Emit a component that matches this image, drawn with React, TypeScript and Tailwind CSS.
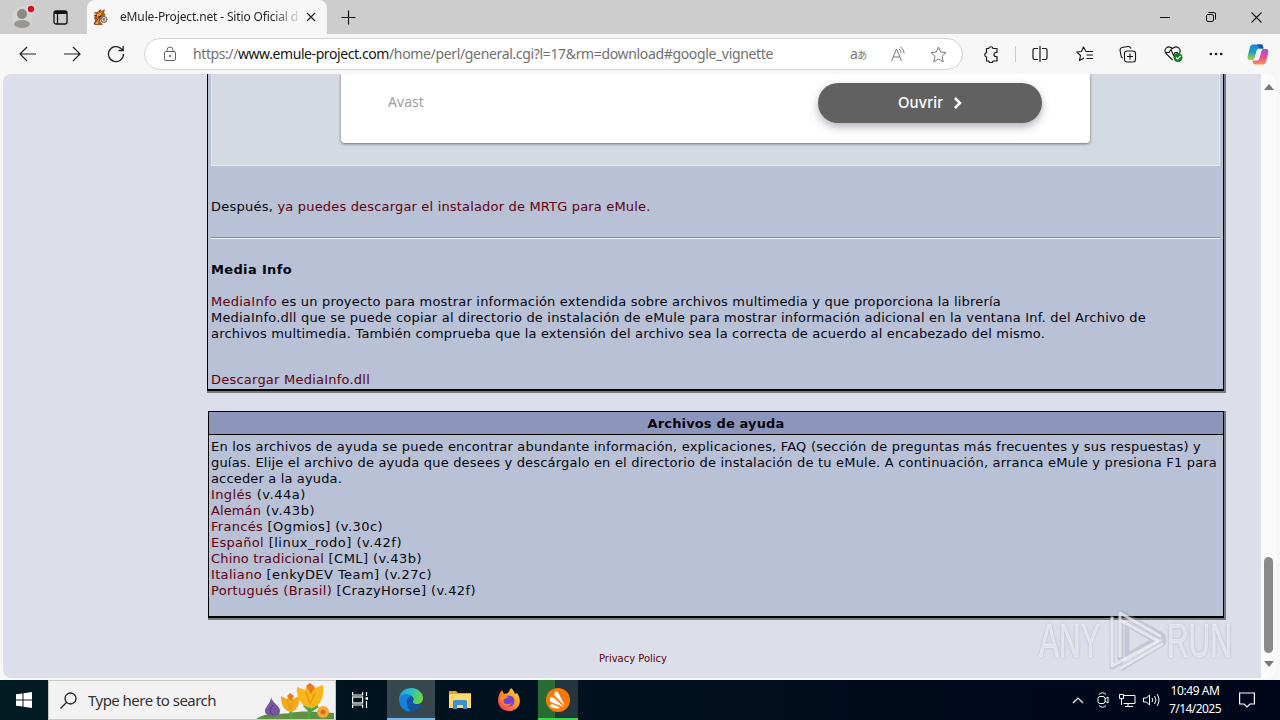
import { useLayoutEffect, useRef, useState } from "react";
import type { ReactNode } from "react";

/* Spreads its text over a given width by adjusting the letter spacing. */
function Fit({ w, className = "", children }: { w: number; className?: string; children: ReactNode }) {
  const ref = useRef<HTMLSpanElement>(null);
  const [gap, setGap] = useState(0);
  useLayoutEffect(() => {
    const el = ref.current;
    if (!el) return;
    const n = (el.textContent || "").length;
    setGap((w - el.getBoundingClientRect().width) / n);
  }, [w]);
  return (
    <span ref={ref} className={"inline-block whitespace-nowrap " + className} style={{ letterSpacing: gap + "px" }}>
      {children}
    </span>
  );
}

const Link = ({ children }: { children: ReactNode }) => <a className="text-[#600010]">{children}</a>;

const helpFiles = [
  { name: "Inglés", rest: " (v.44a)", nw: 41, w: 95 },
  { name: "Alemán", rest: " (v.43b)", nw: 50, w: 104 },
  { name: "Francés", rest: " [Ogmios] (v.30c)", nw: 52, w: 172 },
  { name: "Español", rest: " [linux_rodo] (v.42f)", nw: 53, w: 191 },
  { name: "Chino tradicional", rest: " [CML] (v.43b)", nw: 113, w: 211 },
  { name: "Italiano", rest: " [enkyDEV Team] (v.27c)", nw: 51, w: 221 },
  { name: "Portugués (Brasil)", rest: " [CrazyHorse] (v.42f)", nw: 121, w: 265 },
];

function TitleBar() {
  return (
    <div className="flex h-[34px] bg-[#cdcdcd]">
      <div className="flex w-[87px] items-center rounded-br-lg pl-3">
        <svg width="24" height="28" viewBox="0 0 24 28">
          <circle cx="10" cy="14" r="10.500" fill="#d6d4d2" />
          <circle cx="10" cy="11" r="5" fill="#8d8986" />
          <ellipse cx="10" cy="21" rx="8" ry="4" fill="#9b9794" />
          <circle cx="19" cy="6" r="4.500" fill="#dedede" />
          <circle cx="19" cy="6" r="3.200" fill="#d80f24" />
        </svg>
        <svg className="ml-[17px]" width="15" height="15" viewBox="0 0 15 15" fill="none" stroke="#111" strokeWidth="1.300">
          <rect x="1" y="1" width="13" height="13" rx="2" />
          <path d="M1 2.500h13" strokeWidth="3" />
          <path d="M4.500 4v10" />
        </svg>
      </div>
      <div className="flex w-[240px] items-center rounded-t-lg bg-[#f7f7f7] pl-[6px]">
        <svg width="16" height="18" viewBox="0 0 16 18">
          <path d="M1 4l3 0 4-3 0 2 4-2-1 4 2 2-4 2-2 4 3 4H1l1-4-1-4 2-2z" fill="#a55a20" />
          <path d="M4 6l5-2-2 4-3 2zM3 12l3-1-1 5H2z" fill="#ed9c4b" />
          <path d="M1 7l3 1M5 9l3-1M1 16l4-5" stroke="#48210d" strokeWidth="1" />
          <circle cx="11" cy="11.500" r="3" fill="#e6e0d2" stroke="#5f574c" />
          <path d="M9.500 11h2M11 10v3" stroke="#6c5638" />
        </svg>
        <div className="ml-[11px] w-[178px] overflow-hidden bg-gradient-to-r from-[#222] from-85% to-[#d8d8d8] bg-clip-text font-['Noto_Sans',sans-serif] text-[12px] leading-[18px] text-transparent">
          <Fit w={178}>eMule-Project.net - Sitio Oficial d</Fit>
        </div>
        <svg className="ml-[8px]" width="10" height="10" stroke="#222" strokeWidth="1.200"><path d="M1 1l8 8M9 1l-8 8" /></svg>
      </div>
      <div className="flex flex-1 items-center pl-[14px]">
        <svg width="15" height="15" stroke="#111" strokeWidth="1.200"><path d="M7.500 0.500v14M0.500 7.500h14" /></svg>
      </div>
      <div className="flex w-[120px] items-center justify-between pr-[18px]">
        <svg width="10" height="10" stroke="#111"><path d="M0 5.500h10" /></svg>
        <svg width="10" height="10" fill="none" stroke="#111"><rect x=".5" y="2.500" width="7" height="7" rx="1.500" /><path d="M2.500 .5H8a1.500 1.500 0 0 1 1.500 1.500v5.500" /></svg>
        <svg width="11" height="11" stroke="#111" strokeWidth="1.100"><path d="M.5.500l10 10M10.500.500l-10 10" /></svg>
      </div>
    </div>
  );
}

function ToolBar() {
  return (
    <div className="flex h-[40px] items-center bg-[#f7f7f7]">
      <svg className="ml-[19px]" width="18" height="16" viewBox="0 0 18 16" fill="none" stroke="#222" strokeWidth="1.200"><path d="M17 8H1M8 1L1 8l7 7" /></svg>
      <svg className="ml-[26px]" width="18" height="16" viewBox="0 0 18 16" fill="none" stroke="#222" strokeWidth="1.200"><path d="M1 8h16M10 1l7 7-7 7" /></svg>
      <svg className="ml-[26px]" width="18" height="18" viewBox="0 0 18 18" fill="none" stroke="#222" strokeWidth="1.300"><path d="M16.500 9A7.500 7.500 0 1 1 14 3.500L16 5M16.200 1v4.500h-4.700" /></svg>
      <div className="ml-[19px] flex h-8 w-[819px] items-center rounded-full border border-[#d4d4d4] bg-white">
        <svg className="ml-[18px]" width="14" height="16" viewBox="0 0 14 16" fill="none" stroke="#666"><rect x="1.500" y="5.500" width="11" height="9" rx="1.500" /><path d="M4 5.500V4a3 3 0 0 1 6 0v1.500" /><circle cx="7" cy="10" r=".7" fill="#555" /></svg>
        <div className="ml-[16px] w-[657px] font-['Noto_Sans',sans-serif] text-[14px] leading-5 text-[#707070]">
          <Fit w={196}>https://<span className="text-[#161616]">www.emule-project.com</span></Fit><Fit w={384}>/home/perl/general.cgi?l=17&amp;rm=download#google_vignette</Fit>
        </div>
        <div className="flex items-center text-[#777]">
          <span className="w-[18px] whitespace-nowrap font-['Noto_Sans','Noto_Sans_CJK_JP',sans-serif] text-[14px] leading-4 tracking-[-0.500px]">a<span className="text-[10px]">あ</span></span>
          <svg className="ml-[22px]" width="17" height="17" viewBox="0 0 17 17" fill="none" stroke="#777"><path d="M1.500 15L6.500 3l5 12M3.300 11h6.500M9 3c1.500 1 2 2.500 2 4M10.500 1c2.500 1.500 3.500 4 3.500 6.500" /></svg>
          <svg className="ml-[23px]" width="17" height="17" viewBox="0 0 17 17" fill="none" stroke="#777" strokeLinejoin="round"><path d="M8.500 1l2.200 5 5.300.6-4 3.700 1.200 5.500-4.700-2.800-4.700 2.800L5 10.300 1 6.600 6.300 6z" /></svg>
        </div>
      </div>
      <svg className="ml-[20px]" width="17" height="17" viewBox="0 0 17 17" fill="none" stroke="#171717" strokeWidth="1.200"><path d="M3.500 2.500h2.200a2.200 2.200 0 0 1 4.300 0H14V6.500h-1a2 2 0 0 0 0 4h1V15h-4a2.200 2.200 0 0 1-4.300 0H3.500V11a2.200 2.200 0 0 1 0-4.300z" strokeLinejoin="round" /></svg>
      <div className="ml-[15px] h-4 w-px bg-[#ccc]" />
      <svg className="ml-[16px]" width="16" height="16" viewBox="0 0 16 16" fill="none" stroke="#171717" strokeWidth="1.200"><path d="M6 2.500H2.500a1.500 1.500 0 0 0-1.500 1.500v8a1.500 1.500 0 0 0 1.500 1.500H6M10 2.500h3.500A1.500 1.500 0 0 1 15 4v8a1.500 1.500 0 0 1-1.500 1.500H10M8 0v16" /></svg>
      <svg className="ml-[28px]" width="17" height="16" viewBox="0 0 17 16" fill="none" stroke="#171717" strokeWidth="1.100"><path d="M10 5.500L7.500 1 5.500 5.500.8 6l3.700 3.500L3.500 14.500 8 12M10 5.500h7M10.500 9H17M10.500 12.500H17" strokeLinejoin="round" /></svg>
      <svg className="ml-[26px]" width="18" height="17" viewBox="0 0 18 17" fill="none" stroke="#171717" strokeWidth="1.100"><rect x="5.500" y="5" width="11" height="11" rx="2.500" /><path d="M11 7.500v6M8 10.500h6M3.800 12A2.500 2.500 0 0 1 2 9.600L1 4A2.500 2.500 0 0 1 3 1.500l6-1a2.500 2.500 0 0 1 2.800 2.300" /></svg>
      <svg className="ml-[27px]" width="19" height="18" viewBox="0 0 19 18" fill="none" stroke="#171717" strokeWidth="1.100"><path d="M8.500 15L2 8.500C-1 4 4-.5 8.500 3.500 13-.5 18 4 15.300 8.500M1 7.500h4L7 4.500l2.500 6 1.500-3h3" /><circle cx="14" cy="12.500" r="4.500" fill="#128024" stroke="none" /><path d="M12 12.500l1.500 1.500 3-3" stroke="#fff" /></svg>
      <svg className="ml-[26px]" width="14" height="4" fill="#171717"><circle cx="1.800" cy="2" r="1.300" /><circle cx="7" cy="2" r="1.300" /><circle cx="12.200" cy="2" r="1.300" /></svg>
      <svg className="ml-[24px]" width="22" height="21" viewBox="0 0 22 21">
        <defs>
          <linearGradient id="cp1" x2="0" y2="1"><stop stopColor="#1684e0" /><stop offset=".5" stopColor="#18a4b0" /><stop offset="1" stopColor="#c9ce28" /></linearGradient>
          <linearGradient id="cp2" x2="0" y2="1"><stop stopColor="#a352e5" /><stop offset=".5" stopColor="#e44b9a" /><stop offset="1" stopColor="#ff914d" /></linearGradient>
        </defs>
        <path d="M6 0.500h8c2 0 2 2 2.500 4H12c-1.500 0-2 1-2.500 2.500L7.500 14c-.5 1.500-1 2-2.500 2H3c-2 0-3-2-2-5L3 3C3.500 1.500 4.500.500 6 .500z" fill="url(#cp1)" />
        <path d="M16 20.500H8c-2 0-2-2-2.500-4H10c1.500 0 2-1 2.500-2.500L14.500 7c.5-1.500 1-2 2.500-2h2c2 0 3 2 2 5l-2 8c-.5 1.500-1.500 2.500-3 2.500z" fill="url(#cp2)" />
        <path d="M10 .5h4c2 0 2 2 2.500 4H12z" fill="#1c4eb9" />
      </svg>
    </div>
  );
}

function Page() {
  return (
    <div className="flex h-[606px] bg-[#f7f7f7] pl-[3px] pr-[4px] pb-[2px]">
      <div className="flex w-full overflow-hidden rounded-lg bg-[#dcdfe9] font-['DejaVu_Sans',Verdana,sans-serif] text-[13px] leading-4 text-[#050510]">
        <div className="relative w-[1258px] pl-[204px]">
          <div className="h-[319px] w-[1019px] border-r-2 border-b-2 border-[#777b80]">
            <div className="h-[317px] w-[1017px] border-x-[1.500px] border-b-2 border-black bg-[#b8c1d6] pl-[3px]">
              <div className="h-[92px] w-[1009px] border-x border-b border-[#e2e7f1] bg-[#d5d9e2] pl-[129px]">
                <div className="flex h-[69px] w-[749px] justify-between rounded-b bg-white pr-[48px] pl-[47px] shadow-[0_1px_3px_rgba(0,0,0,0.5)]">
                  <div className="pt-[19px] font-['Open_Sans',sans-serif] text-[14px] leading-[18px] text-[#9a9a9a]"><Fit w={36}>Avast</Fit></div>
                  <div className="mt-[9px] flex h-10 w-[224px] items-center rounded-full bg-[#616161] pl-[80px] font-[Inter,sans-serif] text-[15px] font-medium text-white shadow-[0_4px_9px_rgba(40,30,70,0.35)]">
                    <Fit w={45}>Ouvrir</Fit>
                    <svg className="ml-[10px]" width="9" height="12" fill="none" stroke="#fff" strokeWidth="2.500"><path d="M2 1l5 5-5 5" /></svg>
                  </div>
                </div>
              </div>
              <div className="mt-[33px]"><Fit w={66.5}>Después,&nbsp;</Fit><Fit w={373}><Link>ya puedes descargar el instalador de MRTG para eMule.</Link></Fit></div>
              <div className="mt-[22px] h-[2px] w-[1009px] border-t border-b border-t-[#858b9b] border-b-[#edf1fa]" />
              <div className="mt-[23px] font-bold"><Fit w={81}>Media Info</Fit></div>
              <div className="mt-4 flex flex-col items-start">
                <span className="flex"><Fit w={66}><Link>MediaInfo</Link></Fit><Fit w={724}>&nbsp;es un proyecto para mostrar información extendida sobre archivos multimedia y que proporciona la librería</Fit></span>
                <Fit w={935}>MediaInfo.dll que se puede copiar al directorio de instalación de eMule para mostrar información adicional en la ventana Inf. del Archivo de</Fit>
                <Fit w={834}>archivos multimedia. También comprueba que la extensión del archivo sea la correcta de acuerdo al encabezado del mismo.</Fit>
              </div>
              <div className="mt-[30px]"><Fit w={159}><Link>Descargar MediaInfo.dll</Link></Fit></div>
            </div>
          </div>
          <div className="mt-[18px] ml-px h-[209px] w-[1018px] border-r-2 border-b-2 border-[#777b80]">
            <div className="flex h-[207px] w-[1016px] flex-col border-[1.500px] border-b-2 border-black bg-[#b8c1d6]">
              <div className="flex h-[23px] w-full items-center justify-center border-b border-black bg-[#8c96bc] pt-px font-bold"><Fit w={137}>Archivos de ayuda</Fit></div>
              <div className="flex flex-col items-start pt-[4px] pl-[2px]">
                <Fit w={990}>En los archivos de ayuda se puede encontrar abundante información, explicaciones, FAQ (sección de preguntas más frecuentes y sus respuestas) y</Fit>
                <Fit w={1006}>guías. Elije el archivo de ayuda que desees y descárgalo en el directorio de instalación de tu eMule. A continuación, arranca eMule y presiona F1 para</Fit>
                <Fit w={131}>acceder a la ayuda.</Fit>
                {helpFiles.map((f) => (
                  <span key={f.name} className="flex"><Fit w={f.nw}><Link>{f.name}</Link></Fit><Fit w={f.w - f.nw} className="whitespace-pre">{f.rest}</Fit></span>
                ))}
              </div>
            </div>
          </div>
          <div className="mt-[31px] ml-[392px] text-[10px]"><Fit w={68}><Link>Privacy Policy</Link></Fit></div>
          <Watermark />
        </div>
        <div className="flex flex-1 flex-col items-center bg-[#fbfbfb] pt-[10px] pb-[9px]">
          <svg width="10" height="6"><path d="M0 6L5 0l5 6z" fill="#777" /></svg>
          <div className="mt-[467px] h-[96px] w-[9px] rounded-full bg-[#8a8a8a]" />
          <svg className="mt-[8px]" width="10" height="6"><path d="M0 0l5 6 5-6z" fill="#777" /></svg>
        </div>
      </div>
    </div>
  );
}

function Watermark() {
  return (
    <div className="absolute top-[532px] left-[1036px] flex h-[68px] items-center font-['Liberation_Sans',sans-serif] text-[49px] leading-[68px] text-[#eef0f5]/80 [text-shadow:0_0_3px_rgba(110,115,130,0.55)]">
      <span className="w-[69px]"><span className="inline-block origin-left scale-x-[0.610] whitespace-nowrap [-webkit-text-stroke:1px_rgba(240,242,247,0.6)]">ANY</span></span>
      <svg width="58" height="64" viewBox="0 0 58 64" fill="none" strokeLinejoin="round" strokeLinecap="round">
        <path d="M4 10v49l9-5V17M12 50V5l40 24M14 60l40-24c4-3 4-6 0-9L14 5M19 16v32l27-16z" stroke="#9296a5" strokeOpacity=".3" strokeWidth="5" />
        <path d="M4 10v48l46-25L12 12v36M12 10V5l40 23M13 60l41-24" stroke="#f3f4f8" strokeOpacity=".7" strokeWidth="3" />
      </svg>
      <span className="ml-[1px] w-[64px]"><span className="inline-block origin-left scale-x-[0.610] whitespace-nowrap [-webkit-text-stroke:1px_rgba(240,242,247,0.6)]">RUN</span></span>
    </div>
  );
}

function Flowers() {
  return (
    <svg width="78" height="38" viewBox="0 0 78 38">
      <path d="M0 38c12-8 22-4 34-6 15-3 30-1 44 0v6z" fill="#628e45" />
      <path d="M35 38c0-7-1-9 1-14M53 38c0-9 0-9 1-14M48 24l6 6 8-5" stroke="#54a43a" strokeWidth="3" fill="none" />
      <path d="M15 16c1 6 10 9 9 15-1 6-14 5-15 0-1-5 6-8 6-15z" fill="#7656a0" />
      <path d="M17 24c-4 4-3 8 0 10" stroke="#513574" fill="none" />
      <path d="M25 15l6 3 3-5 3 5 6-3c1 7-1 14-8 16-7-1-10-7-10-16z" fill="#f6a91d" />
      <path d="M41 6l8 3 4-7 6 5 8-3c2 12-3 22-12 23C46 26 40 18 41 6z" fill="#f9b61b" />
      <path d="M50 11l4 12 5-11M31 19l3 9 4-10" stroke="#e79a1b" strokeWidth="1.500" fill="none" />
      <path d="M50 5l4-3 5 4-4 7zM31 15l3-3 4 3-3 5z" fill="#e87920" />
      <circle cx="67" cy="31" r="6" fill="#f5a638" /><circle cx="67" cy="31" r="2.500" fill="#df6b1b" />
    </svg>
  );
}

function TaskBar() {
  return (
    <div className="flex h-10 bg-gradient-to-r from-[#011a22] to-[#00061a] font-['Noto_Sans',sans-serif] text-white">
      <div className="flex w-12 items-center justify-center"><svg width="16" height="16" fill="#fff"><path d="M0 2.300l6.500-.9v6.100H0zM7.500 1.200L16 0v7.500H7.500zM0 8.500h6.500v6.100L0 13.700zM7.500 8.500H16V16l-8.500-1.200z" /></svg></div>
      <div className="flex w-[288px] items-center border border-[#c6c6c6] bg-[#f2f2f2] text-[#333]">
        <svg className="ml-[11px]" width="17" height="17" fill="none" stroke="#222" strokeWidth="1.300"><circle cx="10.500" cy="6.500" r="5.500" /><path d="M6.500 10.500L.500 16.500" /></svg>
        <div className="ml-[11px] w-[168px] text-[15px]"><Fit w={128}>Type here to search</Fit></div>
        <Flowers />
      </div>
      <div className="flex w-[51px] items-center justify-center pr-[3px]">
        <svg width="16" height="16" fill="none" stroke="#fff" strokeWidth="1.200"><path d="M.6 0v3h10V0M.6 16v-3h10v3M14.500 0v4M14.500 9v7" /><rect x=".6" y="5" width="10" height="6" /><path d="M13.500 6.500h2.500" strokeWidth="2.500" /></svg>
      </div>
      <div className="flex w-12 items-center justify-center border-b-2 border-[#76b9ed] bg-[#36474e] pt-[2px]">
        <svg width="24" height="24" viewBox="0 0 24 24">
          <defs><linearGradient id="edge" x2="1" y2=".3"><stop stopColor="#2396df" /><stop offset=".5" stopColor="#2abfc8" /><stop offset="1" stopColor="#67d949" /></linearGradient></defs>
          <path d="M0 12C0 4 6 0 12 0c7 0 12 5 12 10 0 4-3 6-6 6-4 0-5-1-4-3 2-3-1-6-5-6-5 0-9 3-9 5z" fill="url(#edge)" />
          <path d="M0 11c0-4 8-7 13-3-5 0-7 10 0 15C6 25 0 19 0 11z" fill="#1683d8" />
          <path d="M8 14c0-4 3-6 5-5 1 1 2 2 1 4-1 3 4 5 9 3-3 6-8 8-12 7-2-2-3-5-3-9z" fill="#1254a0" />
        </svg>
      </div>
      <div className="flex w-[50px] items-center justify-center"><svg width="22" height="20"><path d="M0 1h7l2 2h13v15H0z" fill="#dfa62e" /><path d="M0 4h22v14H0z" fill="#ffd96a" /><path d="M4 12q0-2 2-2h10q2 0 2 2v7h-4v-4H8v4H4z" fill="#3d91cf" /></svg></div>
      <div className="flex w-[48px] items-center justify-center">
        <svg width="24" height="24" viewBox="0 0 24 24">
          <defs><linearGradient id="fox" x1="1" y1="0" x2="0" y2="1"><stop stopColor="#ffe63d" /><stop offset=".5" stopColor="#ff8a25" /><stop offset="1" stopColor="#f02877" /></linearGradient></defs>
          <path d="M3 5l2-3 2 4 4-1 3-5c2 2 3 3 4 6l2-1c6 8 2 18-8 18C3 23-2 14 3 5z" fill="url(#fox)" />
          <circle cx="12" cy="13" r="5.500" fill="#7441ce" /><path d="M3 8c4-2 5 0 9 1-3 2-5 1-6 4 0 4 6 4 9 2-4 6-12 2-12-7z" fill="#ff8b21" />
        </svg>
      </div>
      <div className="flex w-[5px]" />
      <div className="flex w-10 items-center justify-center border-b-2 border-[#39d843] bg-gradient-to-r from-[#286b35] from-43% to-[#24363e] to-43% pt-[2px]">
        <svg width="24" height="24" viewBox="0 0 24 24"><circle cx="12" cy="12" r="12" fill="#ff7800" /><path d="M9 4c2-1 3 0 4 2l6 12-9-9c-2-2-2-4-1-5zM4 10c1-2 3-1 5 1l9 8-11-4c-3-1-4-3-3-5zM4 17c1-1 3-1 5 0l6 3c-5 1-12 0-11-3z" fill="#fff" /></svg>
      </div>
      <div className="flex flex-1 items-center justify-end">
        <svg width="12" height="7" fill="none" stroke="#fff" strokeWidth="1.200"><path d="M1 6l5-5 5 5" /></svg>
        <svg className="ml-[13px]" width="13" height="16" fill="none" stroke="#fff"><rect x="1" y="4.500" width="7" height="7" rx="2" /><path d="M8 7l3-2v6L8 9M2 2.500Q5.500-1 9 2.500M2 13.500q3.500 3.500 7 0" /></svg>
        <svg className="ml-[9px]" width="17" height="15" fill="none" stroke="#fff"><path d="M5 2.500h11v8H4.500M9 10.500v3M6 13.500h8M2.500 5.500V12M.500 1.500h4v4h-4z" /></svg>
        <svg className="ml-[7px]" width="17" height="14" fill="none" stroke="#fff"><path d="M.500 5h3l3-3v10l-3-3h-3zM9 5q1.500 2 0 4M11.500 3q3 4 0 8M14 1q4 6 0 12" /></svg>
        <div className="ml-[9px] flex w-[52px] flex-col items-center text-[12px] leading-[18px]"><Fit w={49}>10:49 AM</Fit><Fit w={52}>7/14/2025</Fit></div>
        <svg className="mr-[25px] ml-[18px]" width="16" height="16" fill="none" stroke="#fff" strokeWidth="1.200"><path d="M.600 1h14.800v11H11l-3 3-3-3H.600z" /></svg>
      </div>
      <div className="h-10 w-0" />
    </div>
  );
}

export default function App() {
  return (
    <div className="h-[720px] w-[1280px] overflow-hidden">
      <TitleBar />
      <ToolBar />
      <Page />
      <TaskBar />
    </div>
  );
}
